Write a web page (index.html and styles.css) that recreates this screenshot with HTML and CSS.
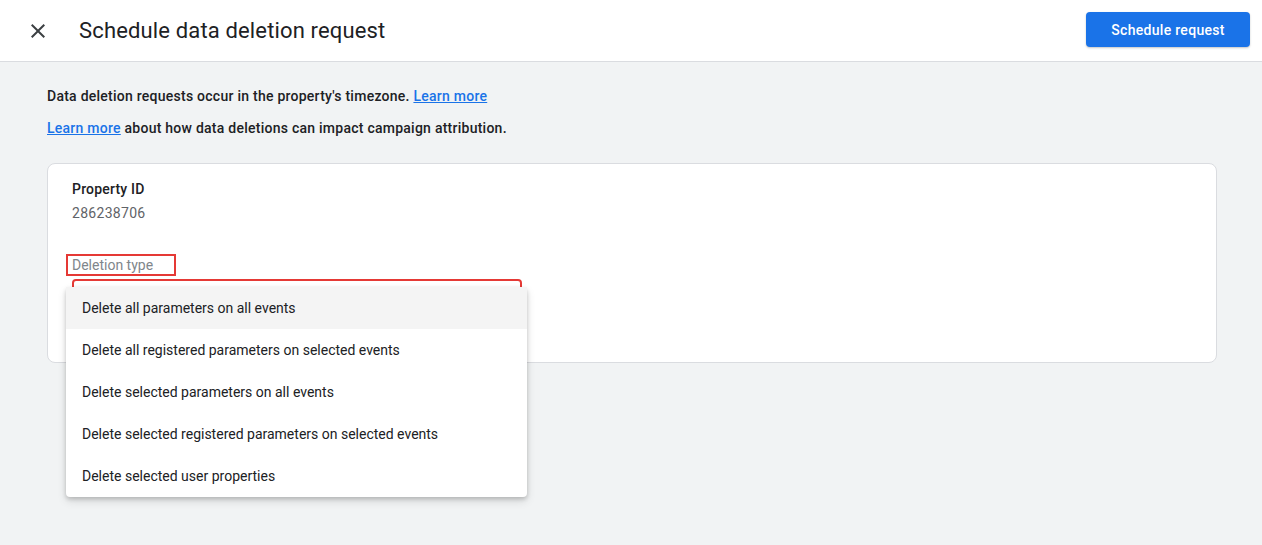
FILE: index.html
```html
<!DOCTYPE html>
<html lang="en">
<head>
    <meta charset="UTF-8">
    <meta name="viewport" content="width=device-width, initial-scale=1.0">
    <title>Schedule data deletion request</title>
    <link rel="stylesheet" href="styles.css">
</head>
<body>
    <header class="topbar">
        <button class="close-btn" aria-label="Close">
            <svg width="24" height="24" viewBox="0 0 24 24">
                <path d="M19 6.41 17.59 5 12 10.59 6.41 5 5 6.41 10.59 12 5 17.59 6.41 19 12 13.41 17.59 19 19 17.59 13.41 12z" fill="#3c4043"/>
            </svg>
        </button>
        <h1 class="title">Schedule data deletion request</h1>
        <button class="primary-btn">Schedule request</button>
    </header>

    <main class="content">
        <p class="note">Data deletion requests occur in the property's timezone. <a href="#">Learn more</a></p>
        <p class="note"><a href="#">Learn more</a> about how data deletions can impact campaign attribution.</p>

        <section class="card">
            <div class="label">Property ID</div>
            <div class="value">286238706</div>

            <div class="field-label"><span>Deletion type</span></div>
            <div class="select-field"></div>
        </section>

        <!-- open dropdown of the deletion type select -->
        <ul class="menu">
            <li class="active">Delete all parameters on all events</li>
            <li>Delete all registered parameters on selected events</li>
            <li>Delete selected parameters on all events</li>
            <li>Delete selected registered parameters on selected events</li>
            <li>Delete selected user properties</li>
        </ul>
    </main>
</body>
</html>
```
FILE: styles.css
```css
* {
    margin: 0;
    padding: 0;
    box-sizing: border-box;
}
html, body {
    height: 100%;
}
body {
    background: #f1f3f4;
    font-family: Roboto, "Noto Sans", Arial, sans-serif;
    color: #202124;
    display: flex;
    flex-direction: column;
}
.topbar {
    flex: none;
    height: 62px;
    background: #fff;
    border-bottom: 1px solid #dadce0;
    display: flex;
    align-items: center;
    padding: 0 12px 0 26px;
}
.close-btn {
    width: 24px;
    height: 24px;
    border: none;
    background: none;
    display: flex;
}
.title {
    margin-left: 29px;
    font-size: 22px;
    font-weight: 400;
    color: #202124;
    letter-spacing: 0.15px;
}
.primary-btn {
    margin-left: auto;
    height: 35px;
    width: 164px;
    border: none;
    border-radius: 4px;
    background: #1a73e8;
    color: #fff;
    font-family: inherit;
    font-size: 14px;
    font-weight: 500;
    letter-spacing: 0.3px;
    box-shadow: 0 1px 2px rgba(60, 64, 67, .3);
    margin-top: -2px;
}
.content {
    position: relative;
    flex: 1;
    padding: 24px 45px 0 47px;
}
.note {
    font-size: 14px;
    font-weight: 500;
    line-height: 20px;
    letter-spacing: 0.25px;
    margin-bottom: 12px;
}
.note a {
    color: #1a73e8;
}
.card {
    margin-top: 25px;
    background: #fff;
    border: 1px solid #dadce0;
    border-radius: 8px;
    padding: 15px 24px 27px;
}
.label {
    font-size: 14px;
    font-weight: 500;
    line-height: 20px;
    letter-spacing: 0.2px;
}
.value {
    margin-top: 4px;
    font-size: 14px;
    line-height: 20px;
    letter-spacing: 0.3px;
    color: #5f6368;
}
.field-label {
    margin-top: 31px;
    margin-left: -6px;
}
.field-label span {
    display: inline-block;
    border: 2px solid #e53935;
    padding: 0 21px 0 4px;
    font-size: 14px;
    line-height: 18px;
    color: #80868b;
}
.select-field {
    margin-top: 3px;
    width: 450px;
    height: 56px;
    border: 2px solid #e53935;
    border-radius: 4px;
}
.menu {
    position: absolute;
    left: 66px;
    top: 225px;
    width: 461px;
    list-style: none;
    background: #fff;
    border-radius: 4px;
    box-shadow: 0 2px 4px rgba(0, 0, 0, .18), 0 4px 10px rgba(0, 0, 0, .12);
    z-index: 10;
}
.menu li {
    height: 42px;
    line-height: 43px;
    padding: 0 16px;
    font-size: 14px;
    color: #202124;
}
.menu li.active {
    background: #f4f4f4;
}
```
